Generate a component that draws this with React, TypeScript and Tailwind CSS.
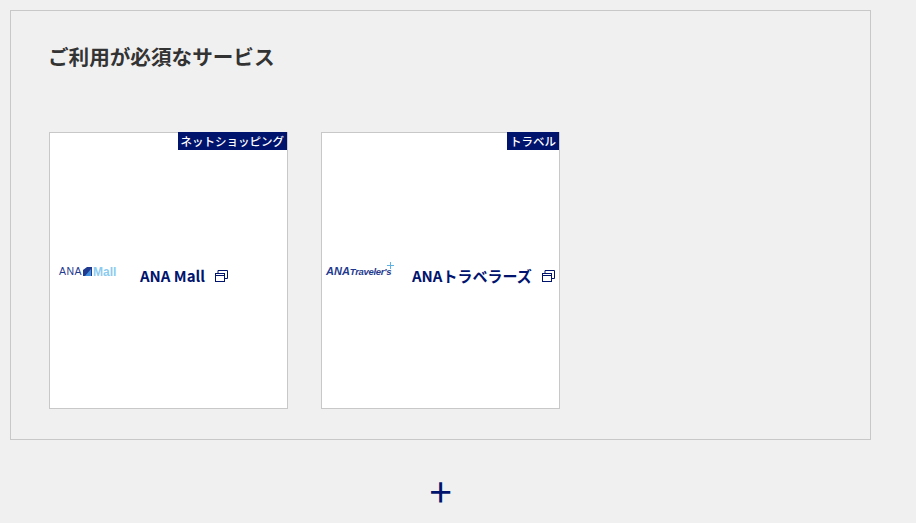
const FONT = "font-['Noto_Sans_CJK_JP','Noto_Sans',sans-serif]";

function ExternalIcon() {
  return (
    <svg width="13" height="12" viewBox="0 0 13 12" fill="none" className="mt-[-2px] shrink-0" stroke="#00146e">
      <rect x="0.5" y="3.5" width="9" height="8" fill="#ffffff" />
      <path d="M0.5 5.5h9" />
      <path d="M3 3V0.5h9.5V8.5H10" />
    </svg>
  );
}

function MallLogo() {
  return (
    <div className="flex w-[56px] items-center text-[10.5px] leading-none font-['Liberation_Sans',sans-serif]">
      <span className="tracking-[0.5px] text-[#1f3a8f]">ANA</span>
      <svg width="9" height="9" viewBox="0 0 9 9" className="ml-[1px] shrink-0">
        <path d="M0 3L4 0h5v9H0z" fill="#1f3a8f" />
        <path d="M2 9L8 2v7z" fill="#3f8fdc" />
      </svg>
      <span className="ml-[1px] text-[12px] font-bold text-[#8ccbf0]">Mall</span>
    </div>
  );
}

function TravelersLogo() {
  return (
    <div className="relative flex w-[67px] items-baseline whitespace-nowrap italic leading-none text-[#1f3a8f] font-['Liberation_Sans',sans-serif]">
      <span className="text-[11px] font-bold">ANA</span>
      <span className="text-[9.5px] font-bold tracking-[-0.3px]">Traveler's</span>
      <svg width="7" height="7" viewBox="0 0 7 7" className="absolute right-[-1px] top-[-4px]" stroke="#5fb2e6">
        <path d="M3.5 0v7M0 3.5h7" />
      </svg>
    </div>
  );
}

function ServiceCard({ tag, name, logo, pad, gap }: { tag: string; name: string; logo: React.ReactNode; pad: string; gap: string }) {
  return (
    <div className={`relative flex h-[277px] w-[239px] items-center border border-[#c8c8c8] bg-white ${pad}`}>
      <span className="absolute right-0 top-[-1px] bg-[#00146e] px-[3px] text-[11.5px] leading-[18px] font-medium text-white">{tag}</span>
      <div className="mt-[2px]">{logo}</div>
      <div className={`mt-[12px] flex items-center gap-[10px] ${gap}`}>
        <span className="whitespace-nowrap text-[15px] font-bold text-[#00146e]">{name}</span>
        <ExternalIcon />
      </div>
    </div>
  );
}

export default function App() {
  return (
    <div className={`h-[523px] w-[916px] overflow-hidden bg-[#f0f0f0] pl-[10px] pt-[10px] ${FONT}`}>
      <section className="h-[430px] w-[861px] border border-[#c8c8c8] px-[38px] pt-[29px]">
        <h2 className="ml-[-1px] text-[20.6px] leading-[32px] font-bold text-[#333333]">ご利用が必須なサービス</h2>
        <div className="mt-[60px] flex gap-[33px]">
          <ServiceCard tag="ネットショッピング" name="ANA Mall" logo={<MallLogo />} pad="pl-[9px]" gap="ml-[25px]" />
          <ServiceCard tag="トラベル" name="ANAトラベラーズ" logo={<TravelersLogo />} pad="pl-[4px]" gap="ml-[19px]" />
        </div>
      </section>
      <div className="flex w-[861px] justify-center">
        <span className="mt-[30px] text-[40px] leading-[40px] text-[#00146e]">+</span>
      </div>
    </div>
  );
}
